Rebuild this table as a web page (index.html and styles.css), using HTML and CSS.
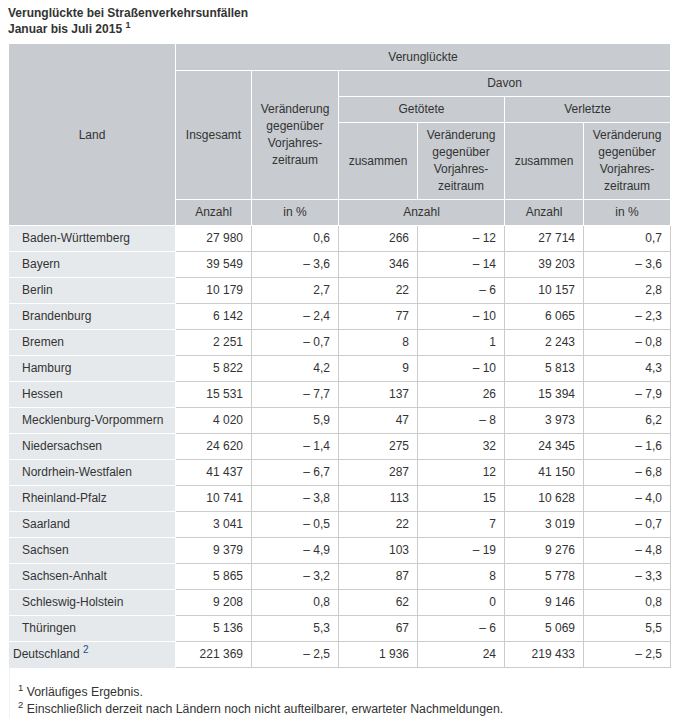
FILE: index.html
```html
<!DOCTYPE html>
<html lang="de">
<head>
<meta charset="utf-8">
<title>Verunglückte bei Straßenverkehrsunfällen</title>
<link rel="stylesheet" href="styles.css">
</head>
<body>
<div class="wrap">
  <h1 class="title">Verunglückte bei Straßenverkehrsunfällen<br>Januar bis Juli 2015 <sup class="tsup">1</sup></h1>
  <table class="tbl">
    <colgroup>
      <col class="c-land"><col class="c-ins"><col class="c-ver"><col class="c-zus"><col class="c-ver"><col class="c-zus"><col class="c-ver2">
    </colgroup>
    <thead>
      <tr class="r1">
        <th rowspan="5" class="h-land">Land</th>
        <th colspan="6">Verunglückte</th>
      </tr>
      <tr>
        <th rowspan="3">Insgesamt</th>
        <th rowspan="3">Veränderung<br>gegenüber<br>Vorjahres-<br>zeitraum</th>
        <th colspan="4">Davon</th>
      </tr>
      <tr>
        <th colspan="2">Getötete</th>
        <th colspan="2">Verletzte</th>
      </tr>
      <tr>
        <th>zusammen</th>
        <th>Veränderung<br>gegenüber<br>Vorjahres-<br>zeitraum</th>
        <th>zusammen</th>
        <th>Veränderung<br>gegenüber<br>Vorjahres-<br>zeitraum</th>
      </tr>
      <tr class="r5">
        <th>Anzahl</th>
        <th>in %</th>
        <th colspan="2">Anzahl</th>
        <th>Anzahl</th>
        <th>in %</th>
      </tr>
    </thead>
    <tbody>
      <tr><th class="land">Baden-Württemberg</th><td>27&nbsp;980</td><td>0,6</td><td>266</td><td>–&nbsp;12</td><td>27&nbsp;714</td><td>0,7</td></tr>
      <tr><th class="land">Bayern</th><td>39&nbsp;549</td><td>–&nbsp;3,6</td><td>346</td><td>–&nbsp;14</td><td>39&nbsp;203</td><td>–&nbsp;3,6</td></tr>
      <tr><th class="land">Berlin</th><td>10&nbsp;179</td><td>2,7</td><td>22</td><td>–&nbsp;6</td><td>10&nbsp;157</td><td>2,8</td></tr>
      <tr><th class="land">Brandenburg</th><td>6&nbsp;142</td><td>–&nbsp;2,4</td><td>77</td><td>–&nbsp;10</td><td>6&nbsp;065</td><td>–&nbsp;2,3</td></tr>
      <tr><th class="land">Bremen</th><td>2&nbsp;251</td><td>–&nbsp;0,7</td><td>8</td><td>1</td><td>2&nbsp;243</td><td>–&nbsp;0,8</td></tr>
      <tr><th class="land">Hamburg</th><td>5&nbsp;822</td><td>4,2</td><td>9</td><td>–&nbsp;10</td><td>5&nbsp;813</td><td>4,3</td></tr>
      <tr><th class="land">Hessen</th><td>15&nbsp;531</td><td>–&nbsp;7,7</td><td>137</td><td>26</td><td>15&nbsp;394</td><td>–&nbsp;7,9</td></tr>
      <tr><th class="land">Mecklenburg-Vorpommern</th><td>4&nbsp;020</td><td>5,9</td><td>47</td><td>–&nbsp;8</td><td>3&nbsp;973</td><td>6,2</td></tr>
      <tr><th class="land">Niedersachsen</th><td>24&nbsp;620</td><td>–&nbsp;1,4</td><td>275</td><td>32</td><td>24&nbsp;345</td><td>–&nbsp;1,6</td></tr>
      <tr><th class="land">Nordrhein-Westfalen</th><td>41&nbsp;437</td><td>–&nbsp;6,7</td><td>287</td><td>12</td><td>41&nbsp;150</td><td>–&nbsp;6,8</td></tr>
      <tr><th class="land">Rheinland-Pfalz</th><td>10&nbsp;741</td><td>–&nbsp;3,8</td><td>113</td><td>15</td><td>10&nbsp;628</td><td>–&nbsp;4,0</td></tr>
      <tr><th class="land">Saarland</th><td>3&nbsp;041</td><td>–&nbsp;0,5</td><td>22</td><td>7</td><td>3&nbsp;019</td><td>–&nbsp;0,7</td></tr>
      <tr><th class="land">Sachsen</th><td>9&nbsp;379</td><td>–&nbsp;4,9</td><td>103</td><td>–&nbsp;19</td><td>9&nbsp;276</td><td>–&nbsp;4,8</td></tr>
      <tr><th class="land">Sachsen-Anhalt</th><td>5&nbsp;865</td><td>–&nbsp;3,2</td><td>87</td><td>8</td><td>5&nbsp;778</td><td>–&nbsp;3,3</td></tr>
      <tr><th class="land">Schleswig-Holstein</th><td>9&nbsp;208</td><td>0,8</td><td>62</td><td>0</td><td>9&nbsp;146</td><td>0,8</td></tr>
      <tr><th class="land">Thüringen</th><td>5&nbsp;136</td><td>5,3</td><td>67</td><td>–&nbsp;6</td><td>5&nbsp;069</td><td>5,5</td></tr>
      <tr><th class="land total">Deutschland <sup class="fsup">2</sup></th><td>221&nbsp;369</td><td>–&nbsp;2,5</td><td>1&nbsp;936</td><td>24</td><td>219&nbsp;433</td><td>–&nbsp;2,5</td></tr>
    </tbody>
  </table>
  <div class="notes">
    <p><sup>1</sup> Vorläufiges Ergebnis.</p>
    <p><sup>2</sup> Einschließlich derzeit nach Ländern noch nicht aufteilbarer, erwarteter Nachmeldungen.</p>
  </div>
</div>
</body>
</html>
```

FILE: styles.css
```css
html, body {
  margin: 0;
  padding: 0;
  background: #fff;
}
body {
  padding: 5px 8px 0 8px;
  font-family: "Liberation Sans", Arial, sans-serif;
  font-size: 12px;
  color: #333;
}
.title {
  margin: 0 0 7px 0;
  font-size: 12px;
  line-height: 16px;
  font-weight: bold;
  color: #333;
}
.tsup {
  font-size: 9px;
  line-height: 0;
  vertical-align: 5px;
  font-weight: bold;
}
.tbl {
  margin-left: 1px;
  width: 662px;
  table-layout: fixed;
  border-collapse: separate;
  border-spacing: 0;
  font-size: 12px;
  line-height: 17px;
}
.c-land { width: 167px; }
.c-ins { width: 76px; }
.c-ver { width: 87px; }
.c-ver2 { width: 87px; }
.c-zus { width: 79px; }
.tbl th,
.tbl td {
  box-sizing: border-box;
  padding: 4px 8px 4px 8px;
  font-weight: normal;
  color: #333;
}
.tbl thead th {
  background: #c8cbcf;
  text-align: center;
  vertical-align: middle;
  border-right: 1px solid #fff;
  border-bottom: 1px solid #fff;
  padding-left: 4px;
  padding-right: 4px;
}
.tbl thead tr.r1 th {
  padding-top: 5px;
}
.tbl thead tr.r5 th {
  padding-top: 4px;
  padding-bottom: 4px;
}
.tbl thead th.h-land {
  border-right: 1px solid #fff;
}
.tbl tbody th.land {
  background: #e6e9ec;
  text-align: left;
  padding-left: 13px;
  border-right: 1px solid #fff;
  border-bottom: 1px solid #fff;
  white-space: nowrap;
}
.tbl tbody th.total {
  padding-left: 4px;
  border-bottom: 1px solid #e6e9ec;
}
.fsup {
  font-size: 10px;
  line-height: 0;
  vertical-align: 5px;
  color: #1d4f8c;
}
.tbl tbody td {
  text-align: right;
  white-space: nowrap;
  background: #fff;
  border-right: 1px solid #ccc;
  border-bottom: 1px solid #ccc;
}
.notes {
  margin-left: 1px;
  padding: 16px 0 0 8px;
  border-left: 1px solid #f2f2f2;
}
.notes p {
  margin: 0;
  font-size: 12.3px;
  line-height: 17px;
  color: #333;
}
.notes sup {
  font-size: 9.5px;
  line-height: 0;
  vertical-align: 5px;
}
```
